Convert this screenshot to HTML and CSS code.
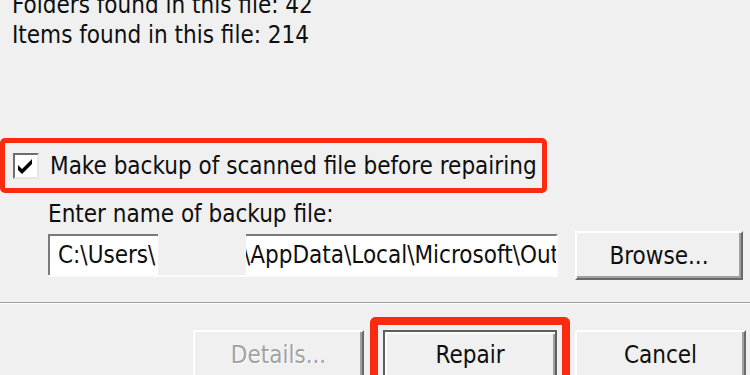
FILE: index.html
```html
<!DOCTYPE html>
<html>
<head>
<meta charset="utf-8">
<link rel="stylesheet" href="styles.css">
</head>
<body>
<div class="dialog">
  <div class="info">
    <div class="line">Folders found in this file: 42</div>
    <div class="line">Items found in this file: 214</div>
  </div>

  <div class="highlight-row">
    <span class="checkbox">
      <svg width="22" height="22" viewBox="0 0 22 22"><polygon points="3,10 7,14 17,4 17,9 7,19 3,15" fill="#000"/></svg>
    </span>
    <span class="check-label">Make backup of scanned file before repairing</span>
  </div>

  <div class="field-label">Enter name of backup file:</div>

  <div class="path-row">
    <div class="path-box">
      <div class="seg seg-a"><span>C:\Users\</span></div>
      <div class="seg seg-gap"></div>
      <div class="seg seg-b"><span>\AppData\Local\Microsoft\Out</span></div>
    </div>
    <div class="btn btn-browse">Browse...</div>
  </div>

  <div class="separator"></div>

  <div class="button-row">
    <div class="btn btn-disabled">Details...</div>
    <div class="default-wrap">
      <div class="btn btn-default">Repair</div>
    </div>
    <div class="btn">Cancel</div>
  </div>
</div>
</body>
</html>
```

FILE: styles.css
```css
html, body {
  margin: 0;
  padding: 0;
  background: #f0f0f0;
  overflow: hidden;
}
body {
  width: 750px;
  height: 375px;
  font-family: "DejaVu Sans Condensed", "DejaVu Sans", sans-serif;
  font-size: 24px;
  color: #0e0e0e;
}
.dialog {
  display: flex;
  flex-direction: column;
}
.info {
  margin-top: -10px;
  padding-left: 12px;
}
.line {
  line-height: 30px;
  height: 30px;
  white-space: nowrap;
}
.highlight-row {
  margin-top: 88px;
  width: 547px;
  height: 55px;
  box-sizing: border-box;
  border: 5px solid #fb2b12;
  border-radius: 5px;
  display: flex;
  align-items: center;
  padding-left: 8px;
}
.checkbox {
  width: 26px;
  height: 26px;
  box-sizing: border-box;
  background: #fff;
  border-top: 2px solid #6e6e6e;
  border-left: 2px solid #6e6e6e;
  border-right: 2px solid #e6e6e6;
  border-bottom: 2px solid #e6e6e6;
  display: flex;
  align-items: center;
  justify-content: center;
  flex: none;
}
.checkbox svg { display: block; }
.check-label {
  margin-left: 11px;
  white-space: nowrap;
  line-height: 30px;
}
.field-label {
  margin-top: 6px;
  padding-left: 48px;
  line-height: 30px;
  height: 30px;
  white-space: nowrap;
}
.path-row {
  margin-top: 2px;
  display: flex;
  align-items: center;
  padding-left: 48px;
}
.path-box {
  width: 510px;
  height: 43px;
  display: flex;
  box-sizing: border-box;
  border-bottom: 2px solid #fbfbfb;
}
.seg {
  box-sizing: border-box;
  height: 41px;
  overflow: hidden;
  white-space: nowrap;
  line-height: 38px;
}
.seg-a {
  width: 110px;
  background: #fff;
  border-top: 2px solid #7a7a7a;
  border-left: 2px solid #7a7a7a;
  padding-left: 8px;
}
.seg-gap {
  width: 88px;
  background: #f0f0f0;
}
.seg-b {
  width: 312px;
  background: #fff;
  border-top: 2px solid #7a7a7a;
  border-right: 2px solid #fbfbfb;
  text-indent: -3px;
}
.btn {
  width: 171px;
  height: 49px;
  box-sizing: border-box;
  background: #f0f0f0;
  border-top: 2px solid #ffffff;
  border-left: 2px solid #ffffff;
  border-right: 2px solid #696969;
  border-bottom: 2px solid #696969;
  box-shadow: inset -2px -2px 0 #a0a0a0;
  display: flex;
  align-items: center;
  justify-content: center;
  line-height: 30px;
  white-space: nowrap;
  flex: none;
}
.btn-browse {
  width: 168px;
  margin-left: 17px;
}
.separator {
  margin-top: 22px;
  height: 1px;
  background: #a0a0a0;
  border-bottom: 1px solid #ffffff;
}
.button-row {
  margin-top: 13px;
  display: flex;
  justify-content: flex-end;
  align-items: flex-start;
  padding-right: 4px;
}
.button-row > .btn {
  margin-top: 13px;
}
.btn-disabled {
  color: #a3a3a3;
  text-shadow: 1px 1px 0 #ffffff;
  margin-right: 6px;
}
.default-wrap {
  border: 8px solid #fb2b12;
  border-bottom: none;
  border-radius: 6px 6px 0 0;
  padding: 5px 5px 0 5px;
  margin-right: 5px;
  height: 60px;
}
.btn-default {
  width: 174px;
  border: 2px solid #5e5e5e;
  box-shadow: inset 2px 2px 0 #ffffff, inset -2px -2px 0 #a0a0a0;
}
```
